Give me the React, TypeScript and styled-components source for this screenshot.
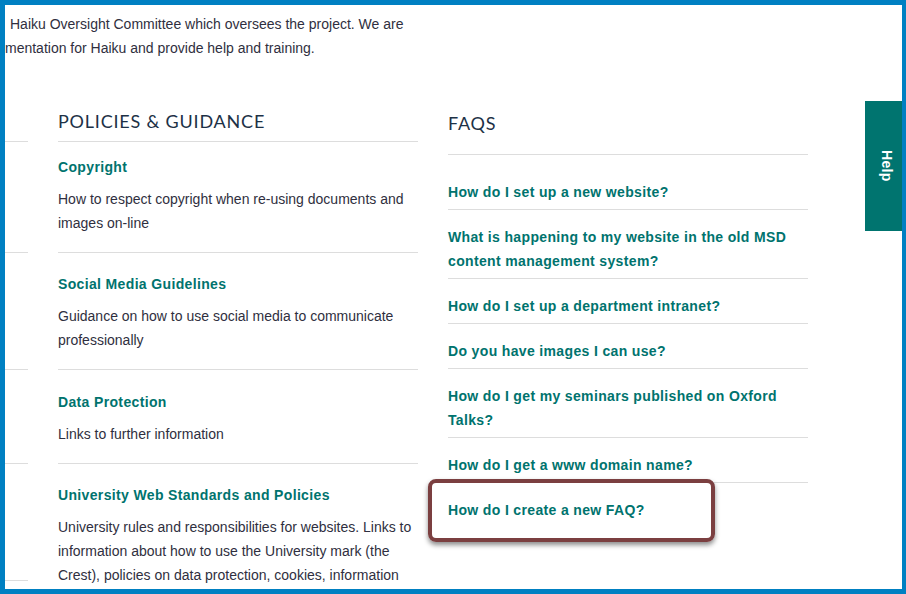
import React from 'react';
import styled, { createGlobalStyle } from 'styled-components';

const policies = [
  {
    title: 'Copyright',
    text: 'How to respect copyright when re-using documents and images on-line',
  },
  {
    title: 'Social Media Guidelines',
    text: 'Guidance on how to use social media to communicate professionally',
  },
  { title: 'Data Protection', text: 'Links to further information' },
  {
    title: 'University Web Standards and Policies',
    text: 'University rules and responsibilities for websites. Links to information about how to use the University mark (the Crest), policies on data protection, cookies, information',
  },
];

const faqs = [
  'How do I set up a new website?',
  'What is happening to my website in the old MSD content management system?',
  'How do I set up a department intranet?',
  'Do you have images I can use?',
  'How do I get my seminars published on Oxford Talks?',
  'How do I get a www domain name?',
  'How do I create a new FAQ?',
];

// row heights of the column that is scrolled out of view on the left
const stubRows = [111, 117, 94, 117, 40];

const App = () => (
  <>
    <GlobalStyle />
    <Frame>
      <Intro>
        Haiku Oversight Committee which oversees the project. We are
        <br />
        mentation for Haiku and provide help and training.
      </Intro>
      <Columns>
        <StubColumn>
          {stubRows.map((h, i) => (
            <StubRow key={i} $height={h} />
          ))}
        </StubColumn>
        <Column>
          <ColumnHeading $space={8}>POLICIES &amp; GUIDANCE</ColumnHeading>
          <List>
            {policies.map((p) => (
              <PolicyItem key={p.title}>
                <ItemTitle href="#">{p.title}</ItemTitle>
                <ItemText>{p.text}</ItemText>
              </PolicyItem>
            ))}
          </List>
        </Column>
        <Column>
          <ColumnHeading $offset={2} $space={19}>
            FAQS
          </ColumnHeading>
          <List>
            {faqs.map((q, i) => (
              <FaqItem key={q}>
                <ItemTitle href="#">{q}</ItemTitle>
                {i === faqs.length - 1 && <Highlight />}
              </FaqItem>
            ))}
          </List>
        </Column>
      </Columns>
      <HelpTab href="#">
        <HelpLabel>Help</HelpLabel>
      </HelpTab>
    </Frame>
  </>
);

const GlobalStyle = createGlobalStyle`
  html, body {
    margin: 0;
    padding: 0;
    background: #fff;
  }
  body {
    font-family: "Liberation Sans", Arial, sans-serif;
  }
`;

const Frame = styled.div`
  position: relative;
  width: 906px;
  height: 594px;
  box-sizing: border-box;
  border-style: solid;
  border-color: #0080c2;
  border-width: 5px 4px 5px 5px;
  overflow: hidden;
  background: #fff;
`;

const Intro = styled.p`
  margin: 0;
  padding-top: 7px;
  font-size: 14px;
  line-height: 24px;
  color: #2f2f40;
  text-indent: 5px;
  white-space: nowrap;
`;

const Columns = styled.div`
  display: flex;
  gap: 30px;
  margin-top: 49px;
`;

const StubColumn = styled.div`
  width: 23px;
  flex: none;
  padding-top: 32px;
`;

const StubRow = styled.div<{ $height: number }>`
  box-sizing: border-box;
  height: ${(p) => p.$height}px;
  border-top: 1px solid #dddddd;
`;

const Column = styled.section`
  width: 360px;
  flex: none;
`;

const ColumnHeading = styled.h2<{ $offset?: number; $space: number }>`
  margin: ${(p) => p.$offset ?? 0}px 0 0;
  padding-bottom: ${(p) => p.$space}px;
  border-bottom: 1px solid #dddddd;
  font-family: Lato, "Open Sans", sans-serif;
  font-size: 18px;
  font-weight: 400;
  line-height: 24px;
  letter-spacing: 0.8px;
  color: #1d3146;
`;

const List = styled.ul`
  margin: 0;
  padding: 0;
  list-style: none;
`;

const PolicyItem = styled.li`
  padding: 19px 0 17px;
  & + & {
    border-top: 1px solid #dddddd;
  }
  &:first-child {
    padding-top: 13px;
  }
  &:nth-child(3) {
    padding-top: 20px;
  }
`;

const FaqItem = styled.li`
  position: relative;
  padding: 15px 0 5px;
  & + & {
    border-top: 1px solid #dddddd;
  }
  &:first-child {
    padding-top: 25px;
  }
`;

const ItemTitle = styled.a`
  display: block;
  font-size: 14px;
  font-weight: 700;
  line-height: 24px;
  letter-spacing: 0.35px;
  color: #00736e;
  text-decoration: none;
`;

const ItemText = styled.p`
  margin: 8px 0 0;
  font-size: 14px;
  line-height: 24px;
  color: #2f2f40;
`;

const Highlight = styled.span`
  position: absolute;
  left: -20px;
  top: -4px;
  width: 287px;
  height: 63px;
  box-sizing: border-box;
  border: 4px solid #7b3f40;
  border-radius: 8px;
  box-shadow: 0 3px 5px rgba(0, 0, 0, 0.45);
  pointer-events: none;
`;

const HelpTab = styled.a`
  position: absolute;
  top: 96px;
  right: 0;
  width: 37px;
  height: 130px;
  display: flex;
  align-items: center;
  justify-content: center;
  padding-left: 6px;
  box-sizing: border-box;
  background: #00746f;
  text-decoration: none;
`;

const HelpLabel = styled.span`
  writing-mode: vertical-rl;
  font-size: 14px;
  font-weight: 700;
  letter-spacing: 0.3px;
  color: #ffffff;
`;

export default App;
